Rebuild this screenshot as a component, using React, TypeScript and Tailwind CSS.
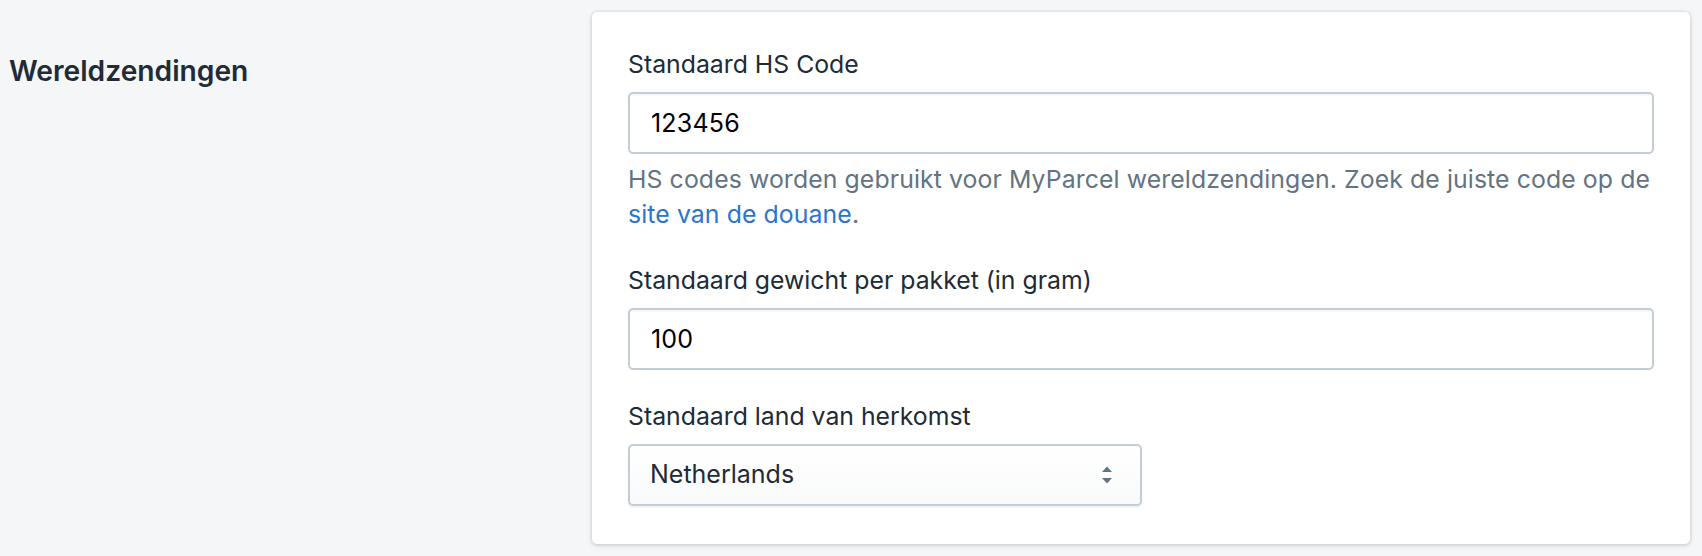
import { useState } from "react";

const font = { fontFamily: "Inter, 'Noto Sans', sans-serif" };

type FieldProps = {
  label: string;
  value: string;
  onChange: (v: string) => void;
};

const TextField = ({ label, value, onChange }: FieldProps) => (
  <div className="flex flex-col">
    <label className="text-[24.8px] leading-[35px] text-[#212b36] mb-[10px]">{label}</label>
    <input
      value={value}
      onChange={(e) => onChange(e.target.value)}
      className="h-[62px] w-full rounded-[5px] border-2 border-[#c4cdd5] bg-white px-[21px] text-[25px] tracking-[0.2px] text-black outline-none shadow-[inset_0_2px_0_0_rgba(99,115,129,0.05)]"
    />
  </div>
);

export default function App() {
  const [hsCode, setHsCode] = useState("123456");
  const [weight, setWeight] = useState("100");
  const [country, setCountry] = useState("Netherlands");

  return (
    <div className="min-h-[556px] w-full bg-[#f4f6f8] flex pt-[12px] pr-[12px]" style={font}>
      <div className="w-[592px] shrink-0 pl-[9px] pt-[38px]">
        <h2 className="text-[28.2px] leading-[42px] font-semibold text-[#212b36]">Wereldzendingen</h2>
      </div>
      <div className="flex-1 h-[532px] rounded-[5px] bg-white px-[36px] pt-[35px] pb-[37px] shadow-[0_0_0_2px_rgba(63,63,68,0.05),0_2px_5px_0_rgba(63,63,68,0.15)]">
        <TextField label="Standaard HS Code" value={hsCode} onChange={setHsCode} />
        <p className="mt-[8px] text-[24.8px] tracking-[0.1px] leading-[35px] text-[#637381]">
          HS codes worden gebruikt voor MyParcel wereldzendingen. Zoek de juiste code op de{" "}
          <a href="#" className="text-[#2a76cc]">site van de douane</a>.
        </p>
        <div className="mt-[31px]">
          <TextField label="Standaard gewicht per pakket (in gram)" value={weight} onChange={setWeight} />
        </div>
        <div className="mt-[29px] flex flex-col">
          <label className="text-[24.8px] leading-[35px] text-[#212b36] mb-[10px]">Standaard land van herkomst</label>
          <div className="relative w-[514px]">
            <select
              value={country}
              onChange={(e) => setCountry(e.target.value)}
              className="h-[62px] w-full appearance-none rounded-[5px] border-2 border-[#c4cdd5] bg-gradient-to-b from-white to-[#f9fafb] pl-[20px] pr-[50px] text-[25px] text-[#212b36] outline-none shadow-[0_2px_0_0_rgba(22,29,37,0.05)]"
              style={font}
            >
              <option>Netherlands</option>
              <option>Belgium</option>
              <option>Germany</option>
            </select>
            <svg
              className="pointer-events-none absolute right-[30px] top-1/2 -translate-y-1/2"
              width="10"
              height="17"
              viewBox="0 0 10 17"
            >
              <polygon points="0,5.5 5,0 10,5.5" fill="#637381" />
              <polygon points="0,11.5 10,11.5 5,17" fill="#637381" />
            </svg>
          </div>
        </div>
      </div>
    </div>
  );
}
